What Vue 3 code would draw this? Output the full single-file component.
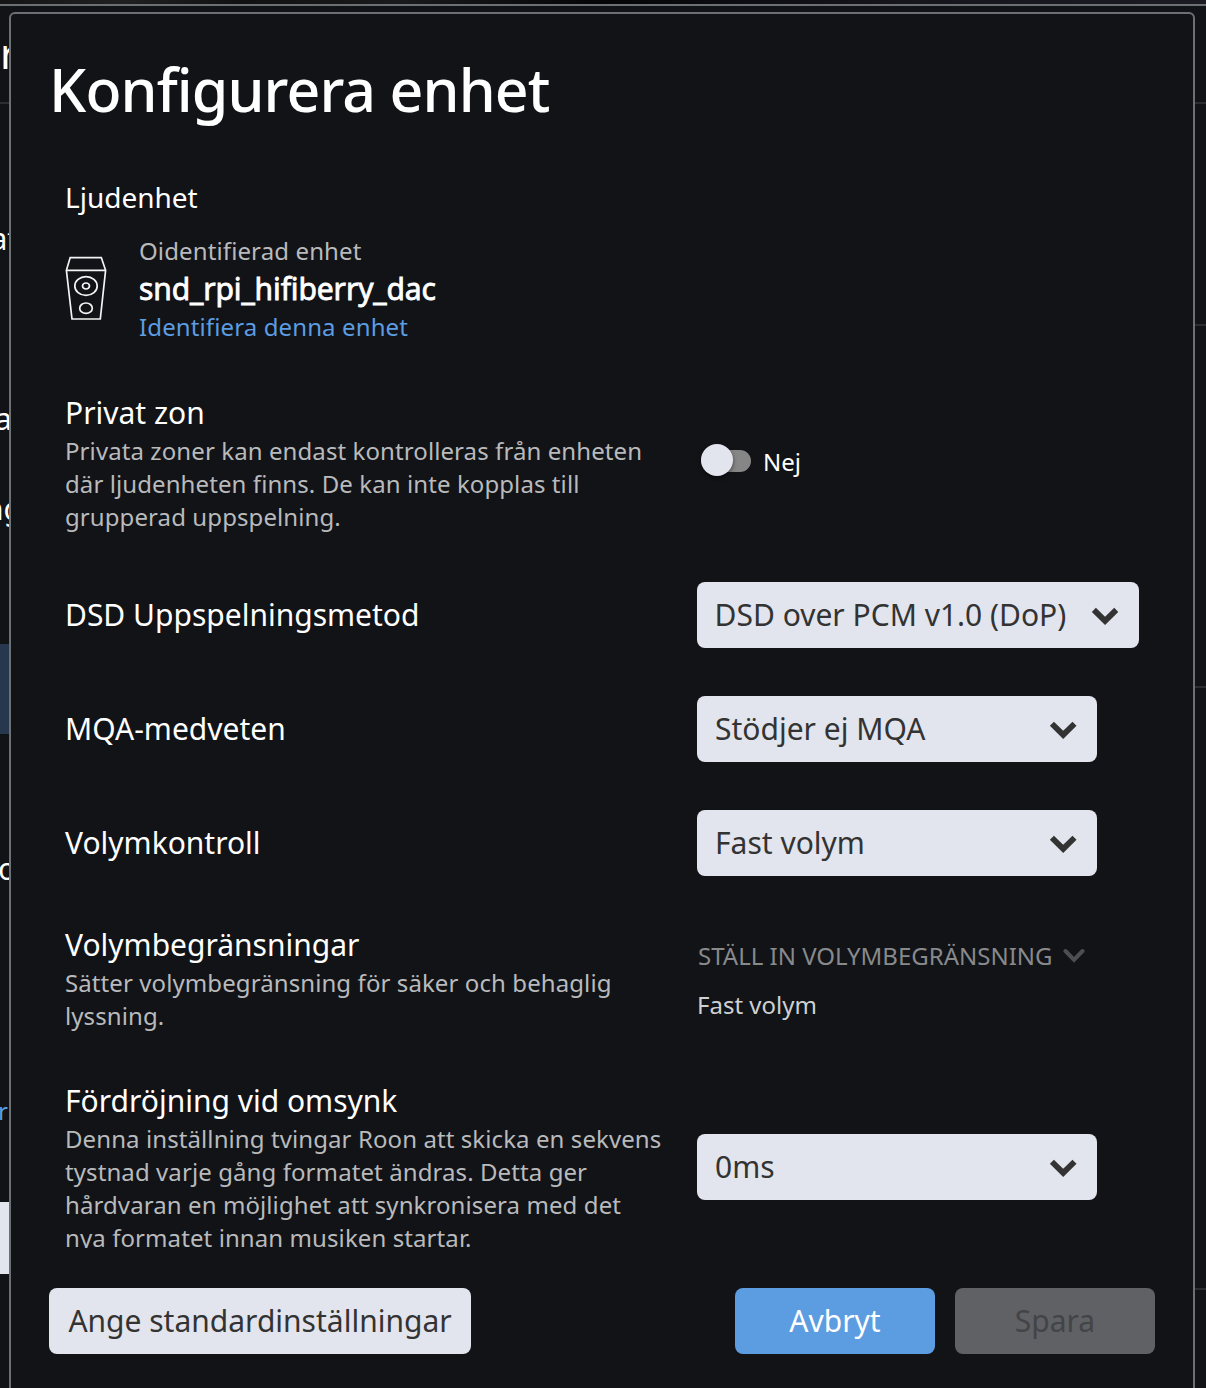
<script setup>
import { ref } from 'vue';

const privateZone = ref(false);

const playback = [
  { label: 'DSD Uppspelningsmetod', value: 'DSD over PCM v1.0 (DoP)' },
  { label: 'MQA-medveten', value: 'Stödjer ej MQA' },
  { label: 'Volymkontroll', value: 'Fast volym' },
];
</script>

<template>
  <div class="page">
    <div class="topbar"></div>
    <div class="behind">
      <div class="strip left">
        <div class="frag heading">r</div>
        <div class="line"></div>
        <div class="frag first">at</div>
        <div class="frag second">a</div>
        <div class="frag third">ng</div>
        <div class="selected"></div>
        <div class="frag fourth">o</div>
        <div class="frag blue">r</div>
        <div class="field"></div>
      </div>
      <div class="strip right">
        <div class="line"></div>
        <div class="line"></div>
        <div class="line"></div>
        <div class="line"></div>
      </div>
    </div>

    <div class="modal">
      <h1>Konfigurera enhet</h1>

      <div class="content">
        <h2>Ljudenhet</h2>
        <div class="device">
          <svg class="device-icon" width="42" height="64" viewBox="0 0 42 64" fill="none" stroke="#f4f4f4" stroke-width="1.7">
            <path d="M5.2 1.6H36.3L40.6 14.3L35.3 63H7L1.4 14.3Z"></path>
            <path d="M1.4 14.3H40.6"></path>
            <ellipse cx="21" cy="30" rx="11.2" ry="9.4"></ellipse>
            <ellipse cx="21" cy="30" rx="3.5" ry="3"></ellipse>
            <ellipse cx="21" cy="52.2" rx="6.3" ry="5.2"></ellipse>
          </svg>
          <div class="device-info">
            <div class="muted">Oidentifierad enhet</div>
            <div class="device-name">snd_rpi_hifiberry_dac</div>
            <a class="identify">Identifiera denna enhet</a>
          </div>
        </div>

        <div class="row private">
          <div class="info">
            <div class="label">Privat zon</div>
            <p>Privata zoner kan endast kontrolleras från enheten där ljudenheten finns. De kan inte kopplas till grupperad uppspelning.</p>
          </div>
          <div class="toggle" :class="{ on: privateZone }" @click="privateZone = !privateZone">
            <span class="track"><span class="knob"></span></span>
            <span>{{ privateZone ? 'Ja' : 'Nej' }}</span>
          </div>
        </div>

        <div v-for="item in playback" :key="item.label" class="row">
          <div class="info">
            <div class="label">{{ item.label }}</div>
          </div>
          <button class="select">
            <span>{{ item.value }}</span>
            <svg width="28" height="20" viewBox="0 0 28 20" fill="none" stroke="#333" stroke-width="5.8">
              <path d="M2.9 3.8L14.2 14.9L25.5 3.8"></path>
            </svg>
          </button>
        </div>

        <div class="row">
          <div class="info">
            <div class="label">Volymbegränsningar</div>
            <p>Sätter volymbegränsning för säker och behaglig lyssning.</p>
          </div>
          <div class="limits">
            <div class="limits-link">
              <span>STÄLL IN VOLYMBEGRÄNSNING</span>
              <svg width="22" height="16" viewBox="0 0 22 16" fill="none" stroke="#4d4e51" stroke-width="4" stroke-linecap="round">
                <path d="M2.5 3L11 11.8L19.5 3"></path>
              </svg>
            </div>
            <div class="limits-value">Fast volym</div>
          </div>
        </div>

        <div class="row">
          <div class="info">
            <div class="label">Fördröjning vid omsynk</div>
            <p>Denna inställning tvingar Roon att skicka en sekvens tystnad varje gång formatet ändras. Detta ger hårdvaran en möjlighet att synkronisera med det nya formatet innan musiken startar.</p>
          </div>
          <button class="select">
            <span>0ms</span>
            <svg width="28" height="20" viewBox="0 0 28 20" fill="none" stroke="#333" stroke-width="5.8">
              <path d="M2.9 3.8L14.2 14.9L25.5 3.8"></path>
            </svg>
          </button>
        </div>
      </div>

      <div class="footer">
        <button class="btn reset">Ange standardinställningar</button>
        <button class="btn cancel">Avbryt</button>
        <button class="btn save" disabled>Spara</button>
      </div>
    </div>
  </div>
</template>

<style>
body {
  background: #111317;
}
</style>

<style scoped>
* {
  box-sizing: border-box;
}

.page {
  position: relative;
  height: 1388px;
  overflow: hidden;
  background: #111317;
  color: #fff;
  font-family: "Noto Sans", sans-serif;
}

.topbar {
  height: 6px;
  background: linear-gradient(90deg, #151515, #202020 10%, #111 20%, #1a1a1c 33%, #050507 50%, #17151c 75%, #1c1a22);
  border-bottom: 2px solid #6b7075;
}

.behind {
  display: flex;
  justify-content: space-between;
}

.strip {
  height: 1382px;
  overflow: hidden;
}

.left {
  width: 10px;
}

.right {
  width: 12px;
}

.line {
  height: 2px;
  background: #2b2d31;
}

.left .line {
  margin-top: 21px;
}

.right .line:nth-child(1) {
  margin-top: 96px;
}

.right .line:nth-child(2) {
  margin-top: 220px;
}

.right .line:nth-child(3) {
  margin-top: 360px;
}

.right .line:nth-child(4) {
  margin-top: 600px;
}

.frag {
  font-size: 30px;
  line-height: 41px;
  white-space: nowrap;
}

.heading {
  margin-top: 20px;
  font-size: 42px;
  line-height: 53px;
  padding-bottom: 2px;
}

.first {
  margin-top: 114px;
  text-indent: -9.5px;
}

.second {
  margin-top: 139px;
  text-indent: -5px;
}

.third {
  margin-top: 49px;
  text-indent: -15px;
}

.selected {
  height: 90px;
  margin-top: 115px;
  background: #26374e;
}

.fourth {
  margin-top: 114px;
  text-indent: -2px;
}

.blue {
  margin-top: 205px;
  font-size: 24px;
  line-height: 33px;
  text-indent: -2px;
  color: #5c9ce1;
}

.field {
  height: 72px;
  margin-top: 75px;
  background: #e2e5ed;
}

.modal {
  position: absolute;
  top: 12px;
  left: 9px;
  width: 1186px;
  height: 1400px;
  padding: 34px 38px 0;
  background: #111317;
  border: 2px solid #6b7075;
  border-radius: 6px;
}

h1 {
  margin: 0 0 48px;
  font-size: 59px;
  font-weight: 500;
  line-height: 82px;
  letter-spacing: -0.9px;
}

.content {
  height: 1070px;
  padding: 0 16px;
  overflow: hidden;
}

h2 {
  margin: 0 0 18px;
  font-size: 28px;
  font-weight: 400;
  line-height: 38px;
}

.device {
  display: flex;
  align-items: center;
  gap: 32px;
  margin-bottom: 49px;
}

.device-icon {
  margin-bottom: 2px;
}

.device-info,
.muted {
  font-size: 24px;
  line-height: 33px;
  letter-spacing: 0.12px;
}

.muted,
p {
  color: #b9babc;
}

.device-name {
  font-size: 30px;
  line-height: 43px;
  letter-spacing: -0.12px;
  -webkit-text-stroke: 0.8px #fff;
}

.identify {
  display: block;
  color: #5c9ce1;
}

.row {
  display: flex;
  align-items: center;
  margin-bottom: 48px;
}

.private {
  margin-bottom: 49px;
}

.info {
  width: 600px;
  margin-right: 32px;
}

.label {
  font-size: 30px;
  line-height: 42px;
}

p {
  margin: 0;
  font-size: 24px;
  line-height: 33px;
  letter-spacing: 0.09px;
}

.toggle {
  display: flex;
  align-items: center;
  gap: 12px;
  padding: 0 0 2px 4px;
  font-size: 24px;
  line-height: 33px;
}

.track {
  position: relative;
  width: 50px;
  height: 22px;
  margin-bottom: 2px;
  border-radius: 11px;
  background: #868686;
}

.knob {
  position: absolute;
  top: -6px;
  left: 0;
  width: 32px;
  height: 32px;
  border-radius: 50%;
  background: #e2e5ed;
  box-shadow: 0 2px 4px rgba(0, 0, 0, 0.5);
}

.toggle.on .knob {
  left: 18px;
}

.select {
  display: flex;
  align-items: center;
  justify-content: space-between;
  gap: 25px;
  min-width: 400px;
  height: 66px;
  padding: 0 20px 2px 18px;
  border: none;
  border-radius: 8px;
  background: #e2e5ed;
  color: #333;
  font-family: inherit;
  font-size: 30px;
  white-space: nowrap;
}

.select svg {
  margin-top: 3px;
}

.limits {
  font-size: 24px;
  line-height: 33px;
}

.limits-link {
  display: flex;
  align-items: center;
  gap: 11px;
  margin: 4px 0 16px;
  padding-left: 1px;
  color: #88898b;
}

.limits-value {
  color: #cfd0d1;
}

.footer {
  display: flex;
  gap: 20px;
  margin-top: 40px;
}

.btn {
  width: 200px;
  height: 66px;
  padding: 0 0 2px;
  border: none;
  border-radius: 8px;
  font-family: inherit;
  font-size: 30px;
}

.reset {
  width: 422px;
  margin-right: auto;
  background: #e2e5ed;
  color: #333;
}

.cancel {
  background: #5c9ce1;
  color: #fff;
}

.save {
  background: #606165;
  color: #434446;
}
</style>
